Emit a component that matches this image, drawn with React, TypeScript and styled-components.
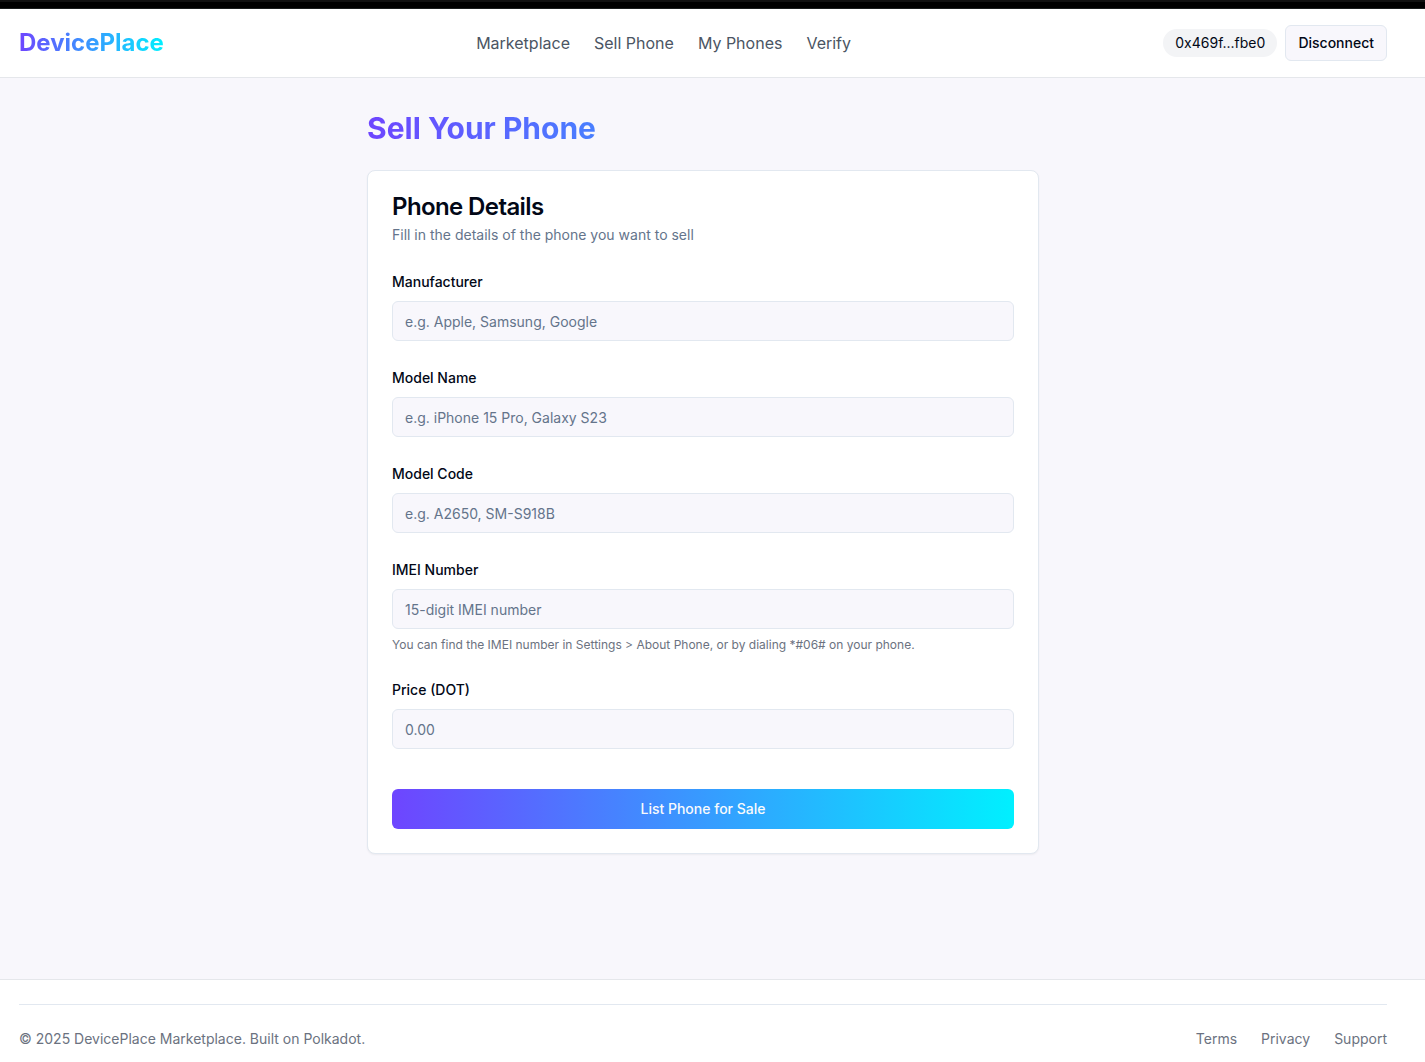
import React from 'react';
import styled, { createGlobalStyle } from 'styled-components';

const GlobalStyle = createGlobalStyle`
  *, *::before, *::after { box-sizing: border-box; }
  body {
    margin: 0;
    background: #f8f7fc;
    color: #020817;
    font-family: Inter, "Liberation Sans", sans-serif;
    font-size: 16px;
    line-height: 24px;
  }
  h1, h2, p { margin: 0; }
  a { color: inherit; text-decoration: none; }
`;

const brandGradient = 'linear-gradient(to right, #6e45ff, #00f0ff)';
const gutter = '19px';

const Page = styled.div`
  display: flex;
  flex-direction: column;
  min-height: 100vh;
`;

const TopBar = styled.div`
  height: 9px;
  border-top: 2px solid #111;
  border-bottom: 1px solid #1a1d1d;
  background: #000;
`;

const Container = styled.div`
  width: 100%;
  max-width: 1400px;
  margin: 0 auto;
  padding: 0 16px;
`;

const Header = styled.header`
  padding-right: ${gutter};
  border-bottom: 1px solid #e5e7eb;
  background: #fff;
`;

const HeaderRow = styled(Container)`
  display: flex;
  align-items: center;
  justify-content: space-between;
  padding: 16px;
`;

const Logo = styled.a`
  background: ${brandGradient};
  background-clip: text;
  color: transparent;
  font-size: 24px;
  line-height: 32px;
  font-weight: 700;
`;

const Nav = styled.nav`
  display: flex;
  gap: 24px;
  color: #4b5563;
`;

const Account = styled.div`
  display: flex;
  align-items: center;
  gap: 8px;
  font-size: 14px;
  line-height: 20px;
`;

const Address = styled.span`
  padding: 4px 12px;
  border-radius: 14px;
  background: #f3f4f6;
`;

const DisconnectButton = styled.button`
  height: 36px;
  padding: 0 12px;
  border: 1px solid #e2e8f0;
  border-radius: 6px;
  background: #f8f7fc;
  color: inherit;
  font: inherit;
  font-weight: 500;
`;

const Main = styled.main`
  flex: 1;
  padding: 32px ${gutter} 32px 0;
`;

const Content = styled.div`
  max-width: 672px;
  margin: 0 auto;
`;

const Title = styled.h1`
  margin-bottom: 24px;
  background: ${brandGradient};
  background-clip: text;
  color: transparent;
  font-size: 30px;
  line-height: 36px;
  font-weight: 700;
`;

const Card = styled.section`
  padding: 24px;
  border: 1px solid #e2e8f0;
  border-radius: 8px;
  background: #fff;
  box-shadow: 0 1px 2px rgba(0, 0, 0, 0.05);
`;

const CardTitle = styled.h2`
  font-size: 24px;
  line-height: 24px;
  font-weight: 600;
  letter-spacing: -0.025em;
`;

const CardText = styled.p`
  margin-top: 6px;
  color: #64748b;
  font-size: 14px;
  line-height: 20px;
`;

const Form = styled.form`
  display: flex;
  flex-direction: column;
  gap: 24px;
  margin-top: 24px;
`;

const Label = styled.label`
  font-size: 14px;
  line-height: 14px;
  font-weight: 500;
`;

const Input = styled.input`
  display: block;
  width: 100%;
  height: 40px;
  margin-top: 8px;
  padding: 8px 12px;
  border: 1px solid #e2e8f0;
  border-radius: 6px;
  background: #f8f7fc;
  color: inherit;
  font: inherit;
  font-size: 14px;
  line-height: 20px;
  &::placeholder { color: #64748b; opacity: 1; }
`;

const Hint = styled.p`
  margin-top: 8px;
  color: #6b7280;
  font-size: 12px;
  line-height: 16px;
`;

const SubmitButton = styled.button`
  height: 40px;
  margin-top: 16px;
  border: 0;
  border-radius: 6px;
  background: ${brandGradient};
  color: #f8fafc;
  font: inherit;
  font-size: 14px;
  line-height: 20px;
  font-weight: 500;
`;

const Footer = styled.footer`
  padding: 24px ${gutter} 0 0;
  border-top: 1px solid #e5e7eb;
  background: #fff;
`;

const FooterRow = styled.div`
  display: flex;
  align-items: center;
  justify-content: space-between;
  padding: 24px 0 13px;
  border-top: 1px solid #e2e8f0;
  color: #6b7280;
  font-size: 14px;
  line-height: 20px;
`;

const FooterLinks = styled.nav`
  display: flex;
  gap: 24px;
`;

type FieldProps = { id: string; label: string; placeholder: string; hint?: string };

const fields: FieldProps[] = [
  { id: 'manufacturer', label: 'Manufacturer', placeholder: 'e.g. Apple, Samsung, Google' },
  { id: 'model-name', label: 'Model Name', placeholder: 'e.g. iPhone 15 Pro, Galaxy S23' },
  { id: 'model-code', label: 'Model Code', placeholder: 'e.g. A2650, SM-S918B' },
  {
    id: 'imei',
    label: 'IMEI Number',
    placeholder: '15-digit IMEI number',
    hint: 'You can find the IMEI number in Settings > About Phone, or by dialing *#06# on your phone.',
  },
  { id: 'price', label: 'Price (DOT)', placeholder: '0.00' },
];

function Field({ id, label, placeholder, hint }: FieldProps) {
  return (
    <div>
      <Label htmlFor={id}>{label}</Label>
      <Input id={id} placeholder={placeholder} aria-describedby={hint ? `${id}-hint` : undefined} />
      {hint && <Hint id={`${id}-hint`}>{hint}</Hint>}
    </div>
  );
}

export default function App() {
  return (
    <>
      <GlobalStyle />
      <Page>
        <TopBar />
        <Header>
          <HeaderRow>
            <Logo href="#">DevicePlace</Logo>
            <Nav>
              <a href="#marketplace">Marketplace</a>
              <a href="#sell">Sell Phone</a>
              <a href="#phones">My Phones</a>
              <a href="#verify">Verify</a>
            </Nav>
            <Account>
              <Address>0x469f...fbe0</Address>
              <DisconnectButton type="button">Disconnect</DisconnectButton>
            </Account>
          </HeaderRow>
        </Header>
        <Main>
          <Content>
            <Title>Sell Your Phone</Title>
            <Card>
              <CardTitle>Phone Details</CardTitle>
              <CardText>Fill in the details of the phone you want to sell</CardText>
              <Form onSubmit={(event) => event.preventDefault()}>
                {fields.map((field) => (
                  <Field key={field.id} {...field} />
                ))}
                <SubmitButton type="submit">List Phone for Sale</SubmitButton>
              </Form>
            </Card>
          </Content>
        </Main>
        <Footer>
          <Container>
            <FooterRow>
              <p>© 2025 DevicePlace Marketplace. Built on Polkadot.</p>
              <FooterLinks>
                <a href="#terms">Terms</a>
                <a href="#privacy">Privacy</a>
                <a href="#support">Support</a>
              </FooterLinks>
            </FooterRow>
          </Container>
        </Footer>
      </Page>
    </>
  );
}
